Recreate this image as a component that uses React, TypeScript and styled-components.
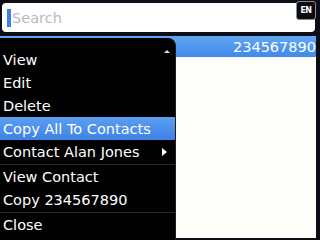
import React from 'react';
import styled, { createGlobalStyle } from 'styled-components';

const GlobalStyle = createGlobalStyle`
  html, body {
    margin: 0;
    padding: 0;
    background: #0b0d17;
  }
  * {
    box-sizing: border-box;
  }
`;

const Screen = styled.div`
  position: relative;
  width: 320px;
  height: 240px;
  overflow: hidden;
  background: #0b0d17;
  font-family: "DejaVu Sans", "Liberation Sans", sans-serif;
  display: flex;
  flex-direction: column;
`;

const TopBar = styled.div`
  height: 36px;
  padding: 3px 5px 4px 2px;
  display: flex;
`;

const SearchBox = styled.div`
  flex: 1;
  display: flex;
  align-items: center;
  gap: 1px;
  padding-left: 5px;
  background: #ffffff;
  border-radius: 4px;
`;

const Cursor = styled.div`
  width: 4px;
  height: 18px;
  background: #3f7fe6;
`;

const Placeholder = styled.span`
  font-size: 14.5px;
  color: #b9b9c2;
`;

const LangBadge = styled.div`
  position: absolute;
  top: 1px;
  left: 296px;
  width: 20px;
  height: 19px;
  display: flex;
  align-items: center;
  justify-content: center;
  background: #0c0c10;
  border: 1px solid #8a8a92;
  border-radius: 3px;
  color: #ffffff;
  font-size: 8px;
  font-weight: bold;
  letter-spacing: -0.5px;
`;

const ListArea = styled.div`
  flex: 1;
  display: flex;
  flex-direction: column;
  margin: 0 4px 2px 0;
  background: #fdfdf9;
`;

const SelectedRow = styled.div`
  height: 21px;
  padding-top: 1px;
  display: flex;
  align-items: center;
  justify-content: flex-end;
  background: linear-gradient(#62a6f2, #4189ea);
  color: #ffffff;
  font-size: 14.5px;
`;

const Menu = styled.div`
  position: absolute;
  left: 0;
  top: 38px;
  bottom: 0;
  width: 176px;
  padding-top: 10px;
  background: #000000;
  border-top-right-radius: 8px;
  border-right: 1px solid #2a1a10;
  display: flex;
  flex-direction: column;
`;

const ScrollUp = styled.svg`
  position: absolute;
  top: 12px;
  left: 164px;
`;

const Item = styled.div<{ $active?: boolean; $divider?: boolean }>`
  flex: none;
  height: ${p => (p.$divider ? '25px' : '23px')};
  padding: 0 8px 0 3px;
  display: flex;
  align-items: center;
  justify-content: space-between;
  font-size: 14.5px;
  color: #ffffff;
  background: ${p => (p.$active ? 'linear-gradient(#5c9ef0, #3d82e6)' : 'transparent')};
  border-bottom: ${p => (p.$divider ? '1px solid #2b2b2b' : 'none')};
`;

const items = [
  { label: 'View' },
  { label: 'Edit' },
  { label: 'Delete' },
  { label: 'Copy All To Contacts', active: true },
  { label: 'Contact Alan Jones', sub: true, divider: true },
  { label: 'View Contact' },
  { label: 'Copy 234567890', divider: true },
  { label: 'Close' },
];

const App: React.FC = () => {
  return (
    <>
      <GlobalStyle />
      <Screen>
        <TopBar>
          <SearchBox>
            <Cursor />
            <Placeholder>Search</Placeholder>
          </SearchBox>
        </TopBar>
        <LangBadge>EN</LangBadge>
        <ListArea>
          <SelectedRow>234567890</SelectedRow>
        </ListArea>
        <Menu>
          <ScrollUp width="6" height="3" viewBox="0 0 6 3">
            <path d="M3 0L6 3H0z" fill="#cfe0ff" />
          </ScrollUp>
          {items.map(item => (
            <Item key={item.label} $active={item.active} $divider={item.divider}>
              <span>{item.label}</span>
              {item.sub && (
                <svg width="5" height="8" viewBox="0 0 5 8">
                  <path d="M0 0L5 4L0 8z" fill="#ffffff" />
                </svg>
              )}
            </Item>
          ))}
        </Menu>
      </Screen>
    </>
  );
};

export default App;
